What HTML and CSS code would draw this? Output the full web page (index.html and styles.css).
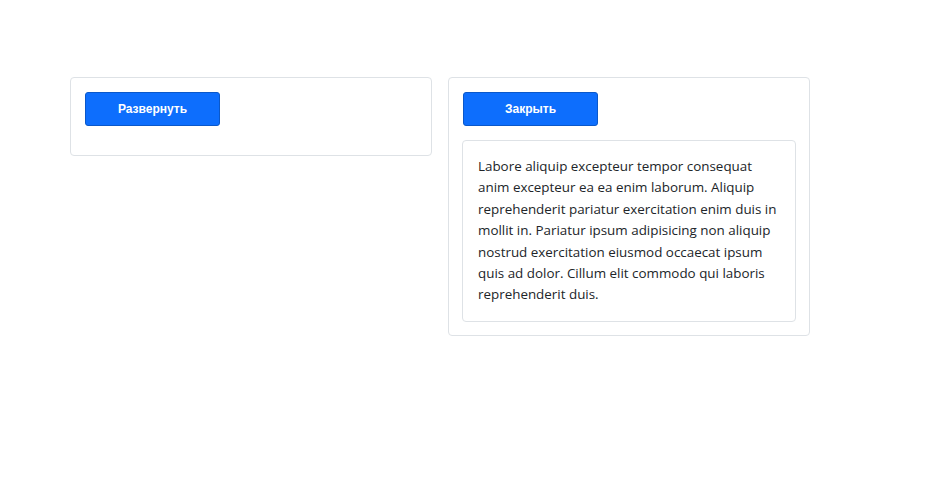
FILE: index.html
```html
<!DOCTYPE html>
<html lang="ru">
<head>
<meta charset="utf-8">
<title>Collapse</title>
<link rel="stylesheet" href="styles.css">
</head>
<body>
<div class="page">
  <div class="card">
    <button class="btn" type="button">Развернуть</button>
    <div class="collapse"></div>
  </div>
  <div class="card">
    <button class="btn" type="button">Закрыть</button>
    <div class="panel">Labore aliquip excepteur tempor consequat anim excepteur ea ea enim laborum. Aliquip reprehenderit pariatur exercitation enim duis in mollit in. Pariatur ipsum adipisicing non aliquip nostrud exercitation eiusmod occaecat ipsum quis ad dolor. Cillum elit commodo qui laboris reprehenderit duis.</div>
  </div>
</div>
</body>
</html>
```
FILE: styles.css
```css
* { box-sizing: border-box; }
html, body { margin: 0; background: #fff; }
body { font-family: "Open Sans", "Noto Sans", sans-serif; color: #212529; }
.page {
  display: flex;
  align-items: flex-start;
  gap: 16px;
  padding: 77px 0 0 70px;
}
.card {
  width: 362px;
  border: 1px solid #dee2e6;
  border-radius: 4px;
  padding: 14px 14px 13px 14px;
  display: flex;
  flex-direction: column;
  align-items: flex-start;
  gap: 14px;
}
.collapse { height: 2px; }
.btn {
  width: 135px;
  height: 34px;
  background: #0d6efd;
  border: 1px solid #0a58ca;
  border-radius: 3px;
  color: #fff;
  font-family: "Liberation Sans", Arial, sans-serif;
  font-weight: bold;
  font-size: 12px;
  padding: 0;
}
.panel {
  width: 334px;
  margin: 0 -1px;
  border: 1px solid #dee2e6;
  border-radius: 4px;
  padding: 15px;
  font-size: 13.4px;
  line-height: 21.4px;
  color: #212529;
}
```
